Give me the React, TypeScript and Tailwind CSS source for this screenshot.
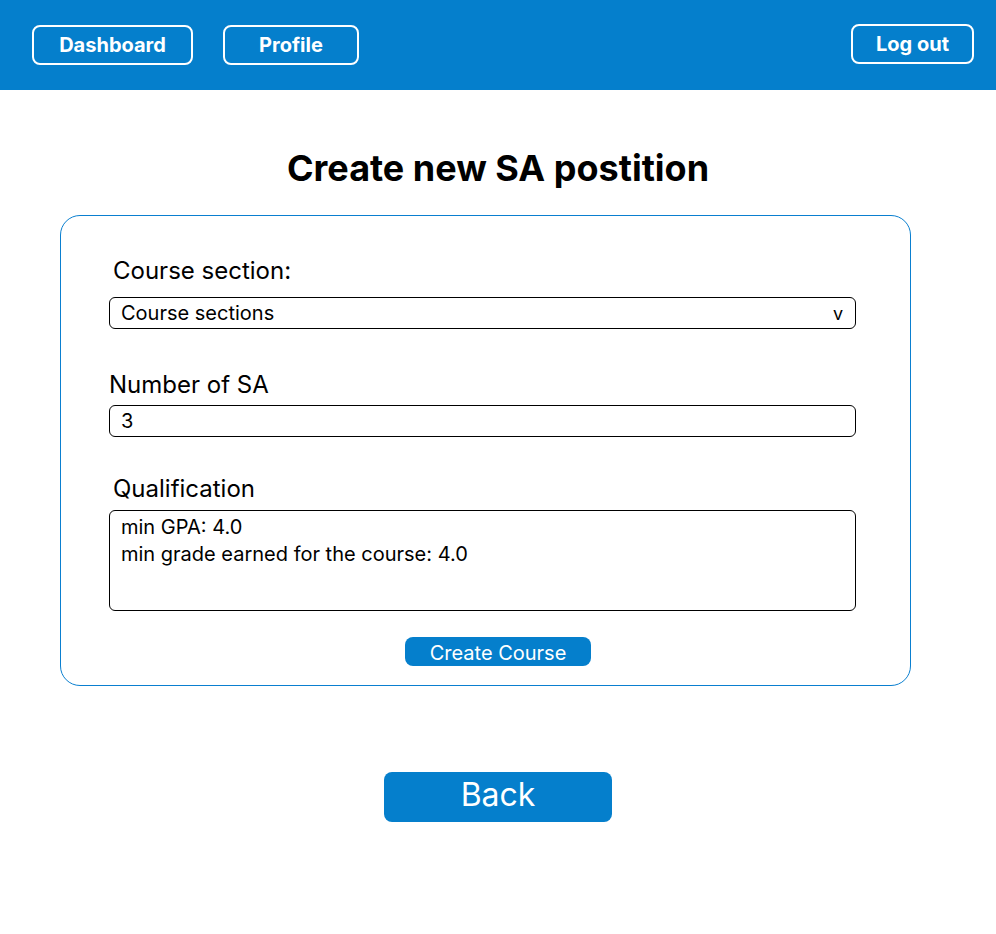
import React from "react";

const font = { fontFamily: "Inter, 'Noto Sans', sans-serif" };

const App = () => {
  return (
    <div className="min-h-[934px] bg-white text-black font-['Inter',sans-serif]">
      {/* Top bar */}
      <header className="h-[90px] bg-[#057fcc] flex items-start justify-between px-[32px] pt-[25px]">
        <div className="flex gap-[30px]">
          <button className="w-[161px] h-[40px] border-2 border-white rounded-[8px] text-white font-bold text-[20px]">
            Dashboard
          </button>
          <button className="w-[136px] h-[40px] border-2 border-white rounded-[8px] text-white font-bold text-[20px]">
            Profile
          </button>
        </div>
        <button className="mt-[-1px] mr-[-10px] w-[123px] h-[40px] border-2 border-white rounded-[8px] text-white font-bold text-[20px]">
          Log out
        </button>
      </header>

      <main className="flex flex-col items-center">
        <h1 className="mt-[54px] text-[36px] leading-[48px] font-bold">Create new SA postition</h1>

        {/* Form card */}
        <section className="self-start ml-[60px] mt-[23px] w-[851px] h-[471px] border border-[#0a7fd0] rounded-[20px] pl-[48px] pr-[54px] pt-[40px]">
          <label className="block ml-[4px] text-[24px] leading-[30px]">Course section:</label>
          <div className="mt-[11px] h-[32px] border border-black rounded-[6px] flex items-center justify-between pl-[11px] pr-[12px] text-[20px]">
            <span>Course sections</span>
            <span className="text-[18px]">v</span>
          </div>

          <label className="block mt-[41px] text-[24px] leading-[30px]">Number of SA</label>
          <div className="mt-[5px] h-[32px] border border-black rounded-[6px] flex items-center pl-[11px] text-[20px]">
            3
          </div>

          <label className="block mt-[37px] ml-[4px] text-[24px] leading-[30px]">Qualification</label>
          <div className="mt-[6px] h-[101px] border border-black rounded-[6px] pl-[11px] pt-[3px] text-[20px] leading-[27px]">
            <div>min GPA: 4.0</div>
            <div>min grade earned for the course: 4.0</div>
          </div>

          <div className="flex mt-[26px] pl-[296px]">
            <button className="w-[186px] h-[29px] pt-[2px] bg-[#057fcc] rounded-[8px] text-white text-[20px] leading-[28px]">
              Create Course
            </button>
          </div>
        </section>

        <button
          style={font}
          className="mt-[86px] w-[228px] h-[50px] pb-[4px] bg-[#057fcc] rounded-[8px] text-white text-[32px] leading-[44px]"
        >
          Back
        </button>
      </main>
    </div>
  );
};

export default App;
